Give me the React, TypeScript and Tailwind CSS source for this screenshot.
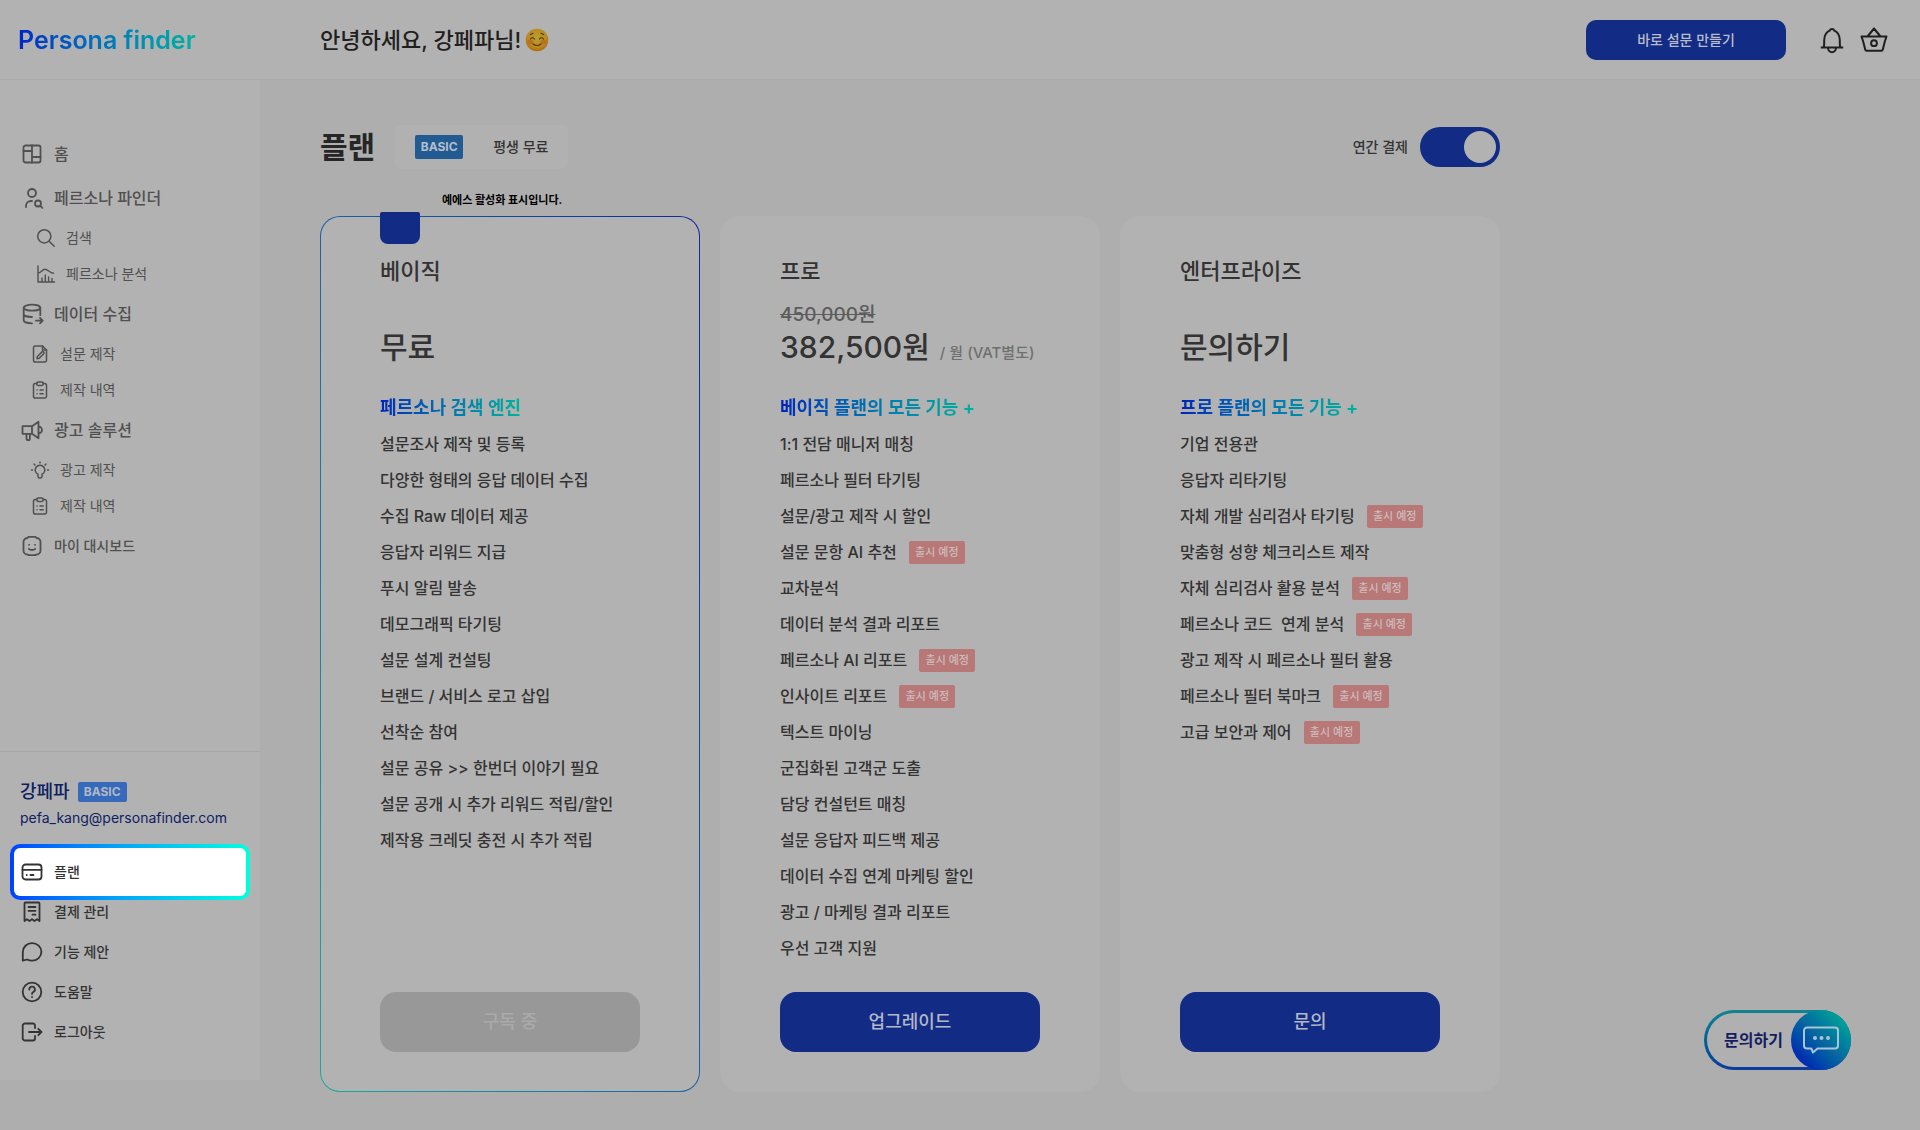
import { useState, type ReactNode } from 'react'
import clsx from 'clsx'

interface Feature {
  label: string
  soon?: boolean
}

interface Plan {
  name: string
  price: string
  originalPrice?: string
  unit?: string
  headline: string
  features: Feature[]
  action: string
  active?: boolean
}

interface NavItem {
  label: string
  icon: ReactNode
  level: 'top' | 'small' | 'sub' | 'subWide'
}

const plans: Plan[] = [
  {
    name: '베이직',
    price: '무료',
    headline: '페르소나 검색 엔진',
    action: '구독 중',
    active: true,
    features: [
      { label: '설문조사 제작 및 등록' },
      { label: '다양한 형태의 응답 데이터 수집' },
      { label: '수집 Raw 데이터 제공' },
      { label: '응답자 리워드 지급' },
      { label: '푸시 알림 발송' },
      { label: '데모그래픽 타기팅' },
      { label: '설문 설계 컨설팅' },
      { label: '브랜드 / 서비스 로고 삽입' },
      { label: '선착순 참여' },
      { label: '설문 공유 >> 한번더 이야기 필요' },
      { label: '설문 공개 시 추가 리워드 적립/할인' },
      { label: '제작용 크레딧 충전 시 추가 적립' },
    ],
  },
  {
    name: '프로',
    price: '382,500원',
    originalPrice: '450,000원',
    unit: '/ 월 (VAT별도)',
    headline: '베이직 플랜의 모든 기능 +',
    action: '업그레이드',
    features: [
      { label: '1:1 전담 매니저 매칭' },
      { label: '페르소나 필터 타기팅' },
      { label: '설문/광고 제작 시 할인' },
      { label: '설문 문항 AI 추천', soon: true },
      { label: '교차분석' },
      { label: '데이터 분석 결과 리포트' },
      { label: '페르소나 AI 리포트', soon: true },
      { label: '인사이트 리포트', soon: true },
      { label: '텍스트 마이닝' },
      { label: '군집화된 고객군 도출' },
      { label: '담당 컨설턴트 매칭' },
      { label: '설문 응답자 피드백 제공' },
      { label: '데이터 수집 연계 마케팅 할인' },
      { label: '광고 / 마케팅 결과 리포트' },
      { label: '우선 고객 지원' },
    ],
  },
  {
    name: '엔터프라이즈',
    price: '문의하기',
    headline: '프로 플랜의 모든 기능 +',
    action: '문의',
    features: [
      { label: '기업 전용관' },
      { label: '응답자 리타기팅' },
      { label: '자체 개발 심리검사 타기팅', soon: true },
      { label: '맞춤형 성향 체크리스트 제작' },
      { label: '자체 심리검사 활용 분석', soon: true },
      { label: '페르소나 코드  연계 분석', soon: true },
      { label: '광고 제작 시 페르소나 필터 활용' },
      { label: '페르소나 필터 북마크', soon: true },
      { label: '고급 보안과 제어', soon: true },
    ],
  },
]

function Icon({ children, width = 1.8 }: { children: ReactNode; width?: number }) {
  return (
    <svg
      viewBox="0 0 24 24"
      className="h-6 w-6 shrink-0"
      fill="none"
      stroke="currentColor"
      strokeWidth={width}
      strokeLinecap="round"
      strokeLinejoin="round"
      aria-hidden="true"
    >
      {children}
    </svg>
  )
}

const clipboardIcon = (
  <Icon width={1.5}>
    <path d="M9 5.5H7.3A1.8 1.8 0 0 0 5.5 7.3v10.9A1.8 1.8 0 0 0 7.3 20h9.4a1.8 1.8 0 0 0 1.8-1.8V7.3a1.8 1.8 0 0 0-1.8-1.8H15" />
    <path d="M10.3 4h3.4a1.5 1.5 0 0 1 0 3.4h-3.4a1.5 1.5 0 0 1 0-3.4zM9 12h.1M12 12h3.2M9 15.7h.1M12 15.7h3.2" />
  </Icon>
)

const mainNav: NavItem[] = [
  {
    label: '홈',
    level: 'top',
    icon: (
      <Icon>
        <rect x="3.5" y="3.5" width="17" height="17" rx="2" />
        <path d="M12 3.5v17M3.5 9H12M12 15h8.5" />
      </Icon>
    ),
  },
  {
    label: '페르소나 파인더',
    level: 'top',
    icon: (
      <Icon>
        <circle cx="12" cy="7" r="4" />
        <path d="M6 21v-1a5 5 0 0 1 5-5h1" />
        <circle cx="18" cy="17.5" r="3" />
        <path d="m20.3 19.8 2 2" />
      </Icon>
    ),
  },
  {
    label: '검색',
    level: 'subWide',
    icon: (
      <Icon width={1.5}>
        <circle cx="10.3" cy="10.3" r="6.6" />
        <path d="m15.2 15.2 5 5" />
      </Icon>
    ),
  },
  {
    label: '페르소나 분석',
    level: 'subWide',
    icon: (
      <Icon width={1.4}>
        <path d="M4 4v16h16.5M4 11c3 0 4-3.7 7-3.7s4.5 3.7 8.5 4M8 20v-4M11.3 20v-7M14.6 20v-5M18 20v-3.5" />
      </Icon>
    ),
  },
  {
    label: '데이터 수집',
    level: 'top',
    icon: (
      <Icon>
        <ellipse cx="12" cy="5.7" rx="8.3" ry="3" />
        <path d="M3.7 5.7v12.6c0 1.7 3.5 3 8.3 3M20.3 5.7v7.5M3.7 12c0 1.7 3.7 3 8.3 3M16 18.7h6.5M20 16l2.7 2.7-2.7 2.7" />
      </Icon>
    ),
  },
  {
    label: '설문 제작',
    level: 'sub',
    icon: (
      <Icon width={1.5}>
        <path d="M14.5 4H7.3a1.8 1.8 0 0 0-1.8 1.8v12.4A1.8 1.8 0 0 0 7.3 20h9.4a1.8 1.8 0 0 0 1.8-1.8V8z" />
        <path d="M14.5 4v4h4M9 16.7l.4-2.2 4.6-4.6a1.3 1.3 0 0 1 1.8 1.8l-4.6 4.6z" />
      </Icon>
    ),
  },
  { label: '제작 내역', level: 'sub', icon: clipboardIcon },
  {
    label: '광고 솔루션',
    level: 'top',
    icon: (
      <Icon>
        <path d="M2.5 8.2H12v7.6H2.5zM12 8.2l6.5-4.5v16.6L12 15.8M6.5 15.8v4.7a1.7 1.7 0 0 0 3.4 0v-4.7M18.5 8.5a3.5 3.5 0 0 1 0 7" />
      </Icon>
    ),
  },
  {
    label: '광고 제작',
    level: 'sub',
    icon: (
      <Icon width={1.5}>
        <path d="M10 16.3a4.8 4.8 0 1 1 4 0v2.2a1.5 1.5 0 0 1-1.5 1.5h-1a1.5 1.5 0 0 1-1.5-1.5zM12 4v1M6 6l1 1M18 6l-1 1M3.5 12h1M19.500 12h1" />
      </Icon>
    ),
  },
  { label: '제작 내역', level: 'sub', icon: clipboardIcon },
  {
    label: '마이 대시보드',
    level: 'small',
    icon: (
      <Icon>
        <path d="M8.5 2.8h7l1 1.2a4 4 0 0 1 4 4v8.5a4 4 0 0 1-4 4l-1 .7h-7l-1-.7a4 4 0 0 1-4-4V8a4 4 0 0 1 4-4z" />
        <path d="M9 10.8h.1M15 10.8h.1M8.8 14.8c1.7 1.6 4.7 1.6 6.4 0" />
      </Icon>
    ),
  },
]

const planIcon = (
  <Icon>
    <rect x="2.5" y="4.5" width="19" height="15" rx="3" />
    <path d="M2.5 9.8h19M6.7 15h.1M10.5 15h3" />
  </Icon>
)

const accountNav = [
  {
    label: '결제 관리',
    icon: (
      <Icon>
        <path d="M4.5 21V3.5a1 1 0 0 1 1-1h13a1 1 0 0 1 1 1V21L17 19.2 14.500 21 12 19.200 9.500 21 7 19.200zM8.500 7h7M8.500 10.800h7M12.500 14.700h3" />
      </Icon>
    ),
  },
  {
    label: '기능 제안',
    icon: (
      <Icon>
        <path d="M2.8 20.7V12a9.3 8.8 0 1 1 9.3 8.7 10 10 0 0 1-5-1.2z" />
      </Icon>
    ),
  },
  {
    label: '도움말',
    icon: (
      <Icon>
        <circle cx="12" cy="12" r="9.3" />
        <path d="M9.3 9.5a2.8 2.8 0 1 1 4.2 2.4c-1 .6-1.5 1-1.5 2M12 17h.1" />
      </Icon>
    ),
  },
  {
    label: '로그아웃',
    icon: (
      <Icon>
        <path d="M15 8V5.5a2 2 0 0 0-2-2H5a2.3 2.3 0 0 0-2.3 2.3v12.4A2.3 2.3 0 0 0 5 20.5h8a2 2 0 0 0 2-2V16M9 12h12.5M18.3 8.8l3.2 3.2-3.2 3.2" />
      </Icon>
    ),
  },
]

const navStyles = {
  top: 'h-11 gap-2.5 pl-5 text-base font-medium',
  small: 'h-11 gap-2.5 pl-5 text-sm font-medium',
  sub: 'h-9 gap-2 pl-7 text-sm',
  subWide: 'h-9 gap-2 pl-[34px] text-sm',
}

function SmileEmoji() {
  return (
    <svg viewBox="0 0 24 24" className="ml-1 h-6 w-6" role="img" aria-label="웃는 얼굴">
      <defs>
        <radialGradient id="face" cx="50%" cy="40%" r="60%">
          <stop offset="0" stopColor="#b8a030" />
          <stop offset="0.7" stopColor="#b98a1c" />
          <stop offset="1" stopColor="#ad6a0c" />
        </radialGradient>
      </defs>
      <circle cx="12" cy="12" r="11.3" fill="url(#face)" />
      <ellipse cx="5.5" cy="14" rx="3" ry="2.2" fill="#b5562a" opacity="0.5" />
      <ellipse cx="18.5" cy="14" rx="3" ry="2.2" fill="#b5562a" opacity="0.5" />
      <path
        d="M5.5 11q2-2.5 4 0M14.5 11q2-2.5 4 0M8 16q4 3 8 0M5.5 6.5l2.5-1.2M18.5 6.5 16 5.3"
        fill="none"
        stroke="#5a3210"
        strokeWidth="1.2"
        strokeLinecap="round"
      />
    </svg>
  )
}

function Header() {
  return (
    <header className="flex h-20 items-center border-b border-[#a8a8a8] bg-[#b2b2b2]">
      <a
        href="#"
        className="ml-[18px] w-[302px] shrink-0 bg-gradient-to-r from-[#0022c8] to-[#00b3a0] to-60% bg-clip-text text-[25px] leading-8 font-semibold text-transparent"
      >
        Persona finder
      </a>
      <p className="flex items-center text-[22px] leading-8 font-medium text-[#1f1f1f]">
        안녕하세요, 강페파님!
        <SmileEmoji />
      </p>
      <div className="mr-8 ml-auto flex items-center">
        <button className="h-10 w-[200px] rounded-[10px] bg-[#122b84] text-sm font-medium text-[#b8bccb]">
          바로 설문 만들기
        </button>
        <button aria-label="알림" className="ml-8 text-[#1f1f1f]">
          <svg viewBox="0 0 28 28" className="h-7 w-7" fill="none" stroke="currentColor" strokeWidth="2" strokeLinejoin="round">
            <path d="M2.8 21.5h22.4M5.5 21.5c.9-1.2.7-2.500.7-7.500 0-5 2.800-8.500 5.500-9.400a2.400 2.400 0 0 1 4.600 0c2.700.9 5.500 4.400 5.500 9.400 0 5-.2 6.300.7 7.500M10 21.500a4 4.800 0 0 0 8 0" />
          </svg>
        </button>
        <button aria-label="장바구니" className="ml-3.5 text-[#1f1f1f]">
          <svg viewBox="0 0 28 28" className="h-7 w-7" fill="none" stroke="currentColor" strokeWidth="2" strokeLinejoin="round">
            <path d="M1.5 10.5h25l-1.7 5-2 8a1.5 1.5 0 0 1-1.5 1.2H6.7a1.5 1.5 0 0 1-1.5-1.2l-2-8zM7.5 10.5l6.500-8 6.500 8" />
            <circle cx="14" cy="17.2" r="2.9" />
          </svg>
        </button>
      </div>
    </header>
  )
}

function Sidebar() {
  return (
    <aside className="flex h-[1000px] w-[260px] shrink-0 flex-col bg-[#b2b2b2]">
      <nav className="pt-13 text-[#505050]">
        {mainNav.map((item, i) => (
          <a key={i} href="#" className={clsx('flex items-center', navStyles[item.level])}>
            {item.icon}
            {item.label}
          </a>
        ))}
      </nav>

      <div className="mt-auto border-t border-[#a6a6a6] pt-6 pb-7">
        <div className="px-5 text-[#0f1d63]">
          <div className="flex h-8 items-center gap-2">
            <strong className="text-lg leading-7 font-medium">강페파</strong>
            <span className="flex h-5 w-[49px] items-center justify-center rounded-xs bg-[#376abb] text-xs font-bold text-[#b2b8c4]">
              BASIC
            </span>
          </div>
          <p className="text-sm leading-5">pefa_kang@personafinder.com</p>
        </div>

        <nav className="mt-6 text-sm font-medium text-[#333]">
          <a
            href="#"
            aria-current="page"
            className="relative z-10 mx-2.5 -my-2 flex h-14 rounded-[10px] bg-gradient-to-r from-[#0040ff] to-[#00ffdd] p-1"
          >
            <span className="flex flex-1 items-center gap-2.5 rounded-md bg-white pl-1.5">
              {planIcon}
              플랜
            </span>
          </a>
          {accountNav.map((item) => (
            <a key={item.label} href="#" className="flex h-10 items-center gap-2.5 pl-5">
              {item.icon}
              {item.label}
            </a>
          ))}
        </nav>
      </div>
    </aside>
  )
}

function PlanCard({ plan }: { plan: Plan }) {
  return (
    <section
      className={clsx(
        'relative flex min-h-[876px] rounded-[20px] p-px',
        plan.active ? 'bg-gradient-to-bl from-[#10289a] via-[#1a62a6] to-[#1fa99d]' : 'bg-[#b2b2b2]',
      )}
    >
      {plan.active && <span className="absolute -top-1 left-[60px] h-8 w-10 rounded-t-xs rounded-b-lg bg-[#122b84]" />}
      <div className="flex flex-1 flex-col rounded-[19px] bg-[#b2b2b2] px-[59px] pt-[38px] pb-[39px] text-[#333]">
        <h2 className="text-[22px] leading-8 font-medium">{plan.name}</h2>
        <div className="mt-4 flex h-16 flex-col justify-end">
          {plan.originalPrice && (
            <del className="text-[19px] leading-6 font-medium text-[#5c5c5c]">{plan.originalPrice}</del>
          )}
          <p className="flex items-baseline gap-2.5 text-3xl leading-10 font-medium whitespace-nowrap">
            {plan.price}
            {plan.unit && <span className="text-[15px] leading-5 font-medium text-[#6f6f6f]">{plan.unit}</span>}
          </p>
        </div>
        <h3 className="mt-[23px] w-fit bg-gradient-to-r from-[#0022b8] to-[#00b39a] bg-clip-text text-lg leading-9 font-bold text-transparent">
          {plan.headline}
        </h3>
        <ul>
          {plan.features.map((f) => (
            <li key={f.label} className="flex h-9 items-center gap-3 text-base font-medium whitespace-pre">
              {f.label}
              {f.soon && (
                <span className="flex h-[23px] w-14 items-center justify-center rounded-xs bg-[#b87878] text-[11px] text-[#cdbcbc]">
                  출시 예정
                </span>
              )}
            </li>
          ))}
        </ul>
        <div className="mt-auto pt-6">
          <button
            disabled={plan.active}
            className={clsx(
              'h-[60px] w-full rounded-2xl text-lg font-medium',
              plan.active ? 'bg-[#989898] text-[#aaa]' : 'bg-[#122b84] text-[#b2b8c8]',
            )}
          >
            {plan.action}
          </button>
        </div>
      </div>
    </section>
  )
}

export default function App() {
  const [yearly, setYearly] = useState(true)

  return (
    <div className="min-h-screen bg-[#aeaeae] font-[Inter,'Noto_Sans_CJK_KR',sans-serif]">
      <Header />
      <div className="flex items-start">
        <Sidebar />
        <main className="min-w-0 flex-1 px-15 pt-[45px] pb-9">
          <div className="max-w-[1180px]">
            <div className="flex h-11 items-center">
              <h1 className="text-3xl font-bold text-[#262626]">플랜</h1>
              <div className="ml-5 flex h-11 items-center gap-[30px] rounded-md bg-[#b1b1b1] px-5 text-sm font-medium text-[#333]">
                <span className="flex h-6 w-12 items-center justify-center rounded-xs bg-[#225a92] text-xs font-bold text-[#b2bfcc]">
                  BASIC
                </span>
                평생 무료
              </div>
              <label className="ml-auto flex items-center gap-3 text-sm font-medium text-[#333]">
                연간 결제
                <input
                  type="checkbox"
                  role="switch"
                  checked={yearly}
                  onChange={(e) => setYearly(e.target.checked)}
                  className="flex h-10 w-20 appearance-none items-center rounded-full bg-[#7d7d7d] px-1 before:h-8 before:w-8 before:rounded-full before:bg-[#b2b2b2] checked:justify-end checked:bg-[#122b84]"
                />
              </label>
            </div>
            <p className="flex h-[47px] items-end pb-[7px] pl-[122px] text-[11px] leading-[18px] font-bold text-black">
              예에스 활성화 표시입니다.
            </p>
            <div className="grid grid-cols-3 gap-5">
              {plans.map((plan) => (
                <PlanCard key={plan.name} plan={plan} />
              ))}
            </div>
          </div>
        </main>
      </div>

      {/* Floating inquiry button */}
      <button className="fixed right-[69px] bottom-[60px] flex h-[60px] w-[147px] rounded-full bg-gradient-to-t from-[#0d3a9c] to-[#14838f] p-[3px]">
        <span className="flex flex-1 items-center rounded-full bg-[#b0b0b0] pl-[17px] text-base font-bold text-[#151c62]">
          문의하기
        </span>
        <span className="absolute top-0 right-0 flex h-[60px] w-[60px] items-center justify-center rounded-full bg-gradient-to-tr from-[#0030b0] from-20% via-[#0a669f] to-[#00a896] to-90%">
          <svg viewBox="0 0 36 28" className="h-7 w-9" fill="none" stroke="#a9c4d4" strokeWidth="2" strokeLinejoin="round" aria-hidden="true">
            <path d="M4 1.5h28a3 3 0 0 1 3 3v15a3 3 0 0 1-3 3H14.5l-4.500 4-1.700-4H4a3 3 0 0 1-3-3v-15a3 3 0 0 1 3-3z" />
            <g fill="#a9c4d4" stroke="none">
              <circle cx="12" cy="12" r="2" />
              <circle cx="18.5" cy="12" r="2" />
              <circle cx="25" cy="12" r="2" />
            </g>
          </svg>
        </span>
      </button>
    </div>
  )
}
